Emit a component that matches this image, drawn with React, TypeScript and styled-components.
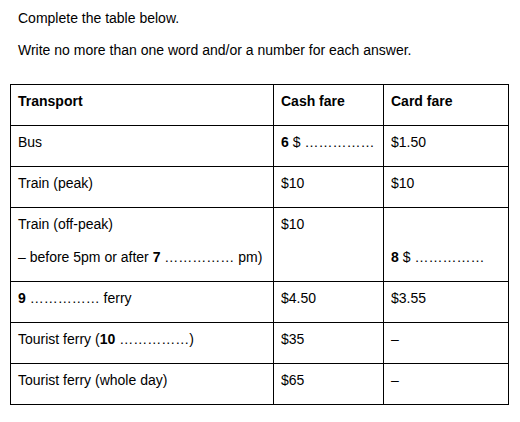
import React from "react";
import styled, { createGlobalStyle } from "styled-components";

const Global = createGlobalStyle`
  html, body { margin: 0; padding: 0; background: #ffffff; }
  body { font-family: "Liberation Sans", Arial, sans-serif; color: #000; }
`;

const Page = styled.div`
  width: 520px;
  height: 422px;
  padding: 9px 0 0 10px;
  box-sizing: border-box;
`;

const Instruction = styled.p`
  margin: 0 0 14px 8px;
  font-size: 14px;
  line-height: 18px;
`;

const Table = styled.table`
  margin-top: 25px;
  border-collapse: collapse;
  width: 499px;
  table-layout: fixed;
  font-size: 14px;
`;

const Cell = styled.td<{ $w?: number; $head?: boolean }>`
  border: 1px solid #000;
  padding: 7px 7px 0 7px;
  vertical-align: top;
  width: ${(p) => (p.$w ? `${p.$w}px` : "auto")};
  font-weight: ${(p) => (p.$head ? 700 : 400)};
`;

const Line = styled.div`
  line-height: 18px;
  margin-bottom: 15px;
  white-space: nowrap;
`;

const Gap = styled.div`
  height: 18px;
  margin-bottom: 15px;
`;

const Num = styled.b`
  font-weight: 700;
`;

const DOTS = "……………";

type Row = { a: React.ReactNode[]; b: React.ReactNode[]; c: React.ReactNode[] };

const rows: Row[] = [
  { a: ["Bus"], b: [<><Num>6</Num> $ {DOTS}</>], c: ["$1.50"] },
  { a: ["Train (peak)"], b: ["$10"], c: ["$10"] },
  {
    a: ["Train (off-peak)", <>– before 5pm or after <Num>7</Num> {DOTS} pm)</>],
    b: ["$10"],
    c: [null, <><Num>8</Num> $ {DOTS}</>],
  },
  { a: [<><Num>9</Num> {DOTS} ferry</>], b: ["$4.50"], c: ["$3.55"] },
  { a: [<>Tourist ferry (<Num>10</Num> {DOTS})</>], b: ["$35"], c: ["–"] },
  { a: ["Tourist ferry (whole day)"], b: ["$65"], c: ["–"] },
];

const renderLines = (items: React.ReactNode[]) =>
  items.map((it, i) => (it === null ? <Gap key={i} /> : <Line key={i}>{it}</Line>));

export default function App() {
  return (
    <Page>
      <Global />
      <Instruction>Complete the table below.</Instruction>
      <Instruction>Write no more than one word and/or a number for each answer.</Instruction>
      <Table>
        <tbody>
          <tr>
            <Cell $w={248} $head><Line>Transport</Line></Cell>
            <Cell $w={95} $head><Line>Cash fare</Line></Cell>
            <Cell $head><Line>Card fare</Line></Cell>
          </tr>
          {rows.map((r, i) => (
            <tr key={i}>
              <Cell>{renderLines(r.a)}</Cell>
              <Cell>{renderLines(r.b)}</Cell>
              <Cell>{renderLines(r.c)}</Cell>
            </tr>
          ))}
        </tbody>
      </Table>
    </Page>
  );
}
